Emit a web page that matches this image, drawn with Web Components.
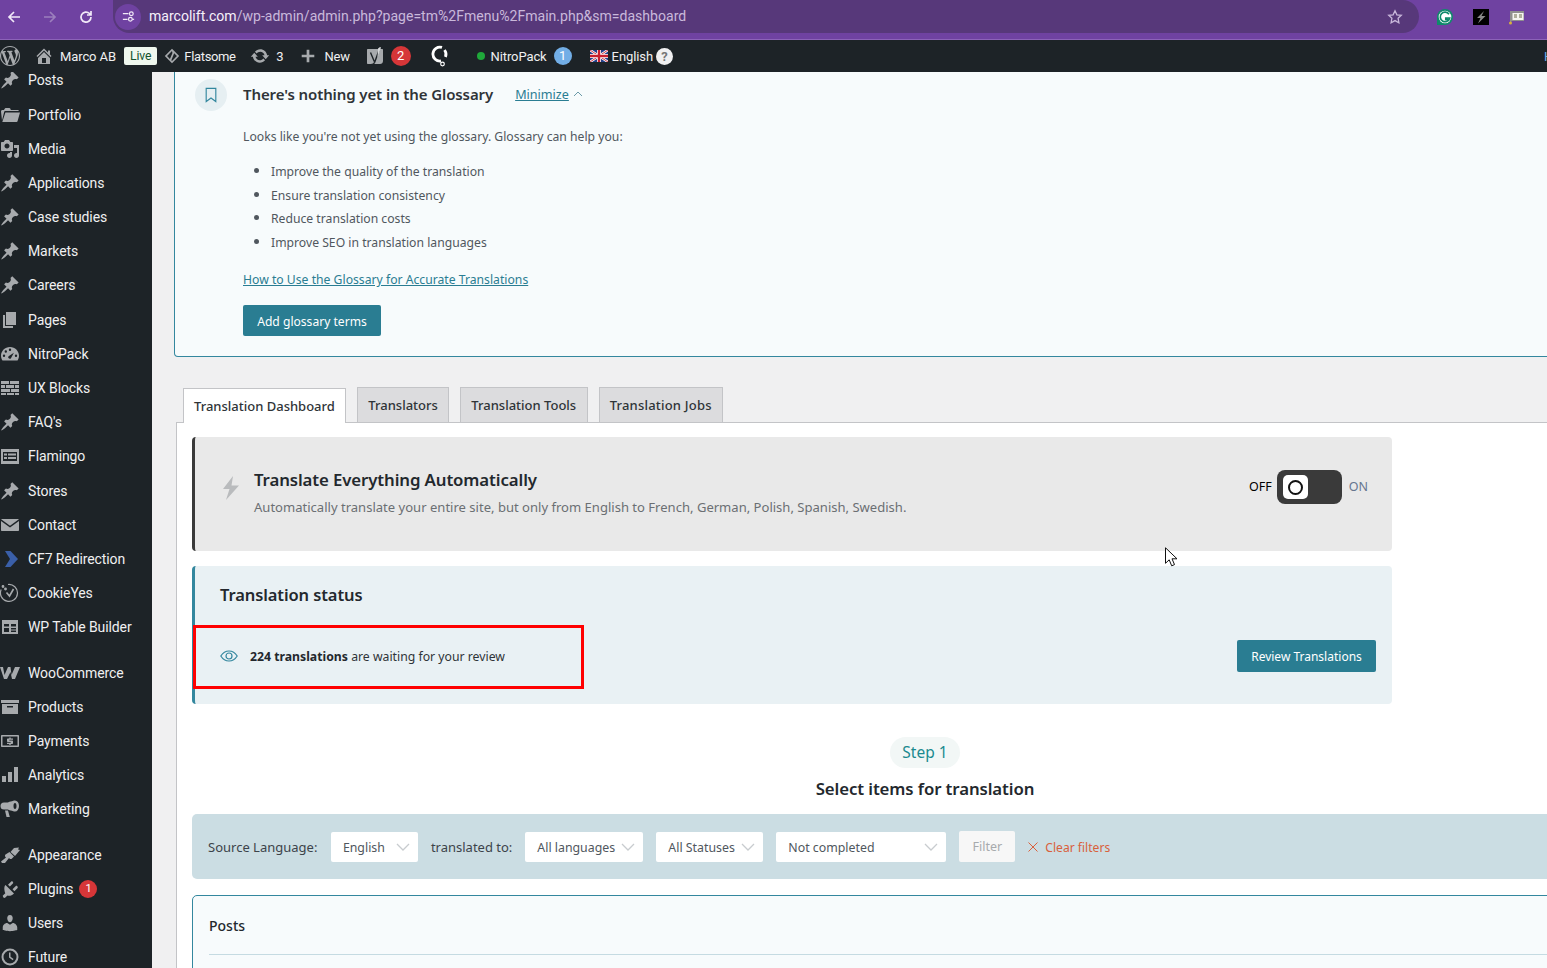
<!DOCTYPE html>
<html lang="en">
<head>
<meta charset="utf-8">
<title>Translation Dashboard</title>
<style>
    html, body {
        margin: 0;
        height: 968px;
        overflow: hidden;
        background: #f0f0f1;
        font-family: "Noto Sans", Roboto, sans-serif;
    }
    #page { position: relative; width: 1547px; height: 968px; overflow: hidden; display: flex; flex-direction: column; }
    #below { display: flex; flex: 1; min-height: 0; }
    #main { flex: 1; min-width: 0; overflow: hidden; }
</style>
</head>
<body>
<div id="page">
    <browser-bar url-host="marcolift.com" url-path="/wp-admin/admin.php?page=tm%2Fmenu%2Fmain.php&amp;sm=dashboard"></browser-bar>
    <admin-bar></admin-bar>
    <div id="below">
        <admin-menu></admin-menu>
        <div id="main">
            <glossary-panel></glossary-panel>
            <dashboard-tabs>
                <auto-translate></auto-translate>
                <translation-status></translation-status>
                <step-heading step="Step 1" title-text="Select items for translation"></step-heading>
                <filter-bar></filter-bar>
                <posts-panel></posts-panel>
            </dashboard-tabs>
        </div>
    </div>
    <review-highlight></review-highlight>
    <mouse-pointer></mouse-pointer>
</div>

<script>
// dashicons style paths, 20x20 box
const ICONS = {
    pin: 'M10.44 3.02l1.82-1.82 6.36 6.35-1.83 1.82c-1.05-.68-2.48-.57-3.41.36l-.75.75c-.92.93-1.04 2.35-.35 3.41l-1.83 1.82-2.41-2.41-2.8 2.79c-.42.42-3.38 2.71-3.8 2.29s1.86-3.39 2.28-3.81l2.79-2.79L4.1 9.36l1.83-1.82c1.05.69 2.48.57 3.4-.36l.75-.75c.93-.92 1.05-2.35.36-3.41z',
    folder: 'M1 6.5C1 5.7 1.6 5 2.4 5H4l.7-1.3c.2-.4.6-.7 1-.7h3.6c.5 0 .9.3 1.1.7l.4 1.3h7.4l.8 1H5.2c-.5 0-.9.3-1 .8L2 15.5 1 6.5zM5.4 7.5H20l-2.4 8.6c-.1.5-.5.9-1 .9H2.3z',
    media: 'M13 11V4c0-.55-.45-1-1-1h-1.67L9 1H5L3.67 3H2c-.55 0-1 .45-1 1v7c0 .55.45 1 1 1h10c.55 0 1-.45 1-1zM7 4.5c1.38 0 2.5 1.12 2.5 2.5S8.38 9.5 7 9.5 4.5 8.38 4.5 7 5.62 4.5 7 4.5zM14 6h5v10.5c0 1.38-1.12 2.5-2.5 2.5S14 17.88 14 16.5s1.12-2.5 2.5-2.5c.17 0 .34.02.5.05V9h-3V6zm-4 8.05V13h2v3.5c0 1.38-1.12 2.5-2.5 2.5S7 17.88 7 16.5 8.12 14 9.5 14c.17 0 .34.02.5.05z',
    page: 'M6 15V2h10v13H6zm-1 1h8v2H3V5h2v11z',
    gauge: 'M10 3C4.9 3 1 7 1 11.8c0 1.8.6 3.4 1.5 4.7h15c.9-1.3 1.5-2.9 1.5-4.7C19 7 15.1 3 10 3zM4 13a1.2 1.2 0 1 1 0-2.4A1.2 1.2 0 0 1 4 13zm1.8-4.3a1.2 1.2 0 1 1 0-2.4 1.2 1.2 0 0 1 0 2.4zM10 7a1.2 1.2 0 1 1 0-2.4A1.2 1.2 0 0 1 10 7zm.8 7.4c-.8.6-1.8.4-2.3-.3-.5-.7-.3-1.7.4-2.2l5-3.2-3.1 5.7zM16 13a1.2 1.2 0 1 1 0-2.4 1.2 1.2 0 0 1 0 2.4z',
    blocks: 'M1 3h8v3H1zM10 3h9v3h-9zM1 7h4v3H1zM6 7h8v3H6zM15 7h4v3h-4zM1 11h9v3H1zM11 11h8v3h-8zM1 15h5v2H1zM7 15h7v2H7zM15 15h4v2h-4z',
    form: 'M1 3h18v15H1zM3 6v9h14V6zM4 7.5h3v2H4zM8 7.5h8v2H8zM4 11h3v2H4zM8 11h8v2H8z',
    mail: 'M2 4h16c.4 0 .7.1.9.3L10 10.8 1.1 4.3C1.3 4.1 1.6 4 2 4zM1 6l9 6.5L19 6v9c0 .6-.4 1-1 1H2c-.6 0-1-.4-1-1z',
    chevron: 'M5 2h5.5L18 10l-7.5 8H5l5-8z',
    table: 'M2 3h16v14H2zM4 7v2.5h5V7zm7 0v2.5h5V7zM4 11v4h5v-4zm7 0v1.5h5V11zm0 2.5V15h5v-1.5z',
    woo: 'M0 4h3l1.5 8L8 4h2.5l1 8L15 4h5l-5 12h-3l-1.5-7L7 16H4z',
    box: 'M1 3h18v3H1zM2 7h16v10H2zm5 2v1.5h6V9z',
    pay: 'M2 4h16c.6 0 1 .4 1 1v10c0 .6-.4 1-1 1H2c-.6 0-1-.4-1-1V5c0-.6.4-1 1-1zm.5 1.500v9h15v-9zM9.3 6.5h1.4v.9H13v1.300H9.300v.8H12c.6 0 1 .4 1 1v1.500c0 .6-.4 1-1 1h-1.300v.9H9.300v-.9H7v-1.300h3.700v-.8H8c-.6 0-1-.4-1-1V8.400c0-.6.4-1 1-1h1.300z',
    bars: 'M2 11h4v6H2zM8 7h4v10H8zM14 2h4v15h-4z',
    horn: 'M15 1.500a4 5.500 0 0 1 0 11c-1.500 0-7.500-2-7.500-2H4a3.500 3.500 0 0 1 0-7h3.500S13.500 1.500 15 1.500zm0 2.500c-.9 0-1.500 1.300-1.500 3s.6 3 1.500 3 1.500-1.300 1.500-3-.6-3-1.500-3zM5 11.500h3l1.800 6.500H6.500z',
    brush: 'M14 3l5-.5-1 2 2 .5-5 6-4.500-4zM9.500 7l4.500 4.500-2 2c-.7.7-1.800.7-2.500 0l-.5-.5-4 5H2l-1-1.500 5-4-.5-.5c-.7-.7-.7-1.800 0-2.500z',
    plug: 'M13.110 4.360L9.870 7.600 8 5.730l3.240-3.240c.35-.34 1.050-.25 1.540.24.49.49.58 1.190.33 1.630zm4.530 4.530l-3.240 3.240-1.870-1.870 3.240-3.240c.35-.34 1.050-.25 1.540.24.49.49.58 1.190.33 1.630zM5.500 6l8.500 8.500c-2 2-4.500 2.800-6.500 2L4.800 19l-1.500-.4-.6-1.800 2.600-2.500C4.500 12.200 3.500 8 5.500 6z',
    user: 'M10 9.250c-2.270 0-2.730-3.440-2.730-3.440C7 4.020 7.820 2 9.970 2c2.160 0 2.980 2.020 2.710 3.810 0 0-.41 3.440-2.680 3.440zm0 2.570L12.720 10c2.390 0 4.520 2.330 4.520 4.530v2.490s-3.650 1.130-7.240 1.130c-3.650 0-7.240-1.130-7.240-1.130v-2.490c0-2.250 1.940-4.480 4.470-4.480z',
    clock: 'M10 1.500a8.500 8.500 0 1 1 0 17 8.500 8.500 0 0 1 0-17zm0 2a6.500 6.500 0 1 0 0 13 6.500 6.500 0 0 0 0-13zM9 5.500h1.500v4.300l3.100 2.100-.9 1.300L9 10.600z',
    home: 'M16 8.500l1.530 1.530-1.060 1.060L10 4.620l-6.470 6.470-1.060-1.060L10 2.500l4 4v-2h2v4zm-6-2.460l6 5.990V18H4v-5.970zM12 17v-5H8v5h4z',
    wp: 'M20 10c0-5.510-4.490-10-10-10C4.480 0 0 4.490 0 10c0 5.520 4.480 10 10 10 5.510 0 10-4.480 10-10zM7.780 15.370L4.370 6.220c.55-.02 1.170-.08 1.170-.08.5-.06.44-1.130-.06-1.110 0 0-1.450.11-2.370.11-.18 0-.37 0-.58-.01C4.120 2.690 6.870 1.110 10 1.110c2.330 0 4.450.87 6.050 2.340-.68-.11-1.650.39-1.650 1.580 0 .74.45 1.360.9 2.100.35.61.55 1.360.55 2.460 0 1.490-1.400 5-1.400 5l-3.030-8.370c.54-.02.82-.17.82-.17.5-.05.44-1.250-.06-1.220 0 0-1.440.12-2.380.12-.87 0-2.330-.12-2.330-.12-.5-.03-.56 1.200-.06 1.220l.92.08 1.260 3.410zM17.410 10c.24-.64.74-1.870.43-4.250.7 1.290 1.050 2.710 1.050 4.250 0 3.290-1.730 6.240-4.400 7.780.97-2.590 1.940-5.200 2.920-7.780zM6.100 18.090C3.120 16.650 1.110 13.530 1.110 10c0-1.300.23-2.480.72-3.590C3.250 10.300 4.670 14.200 6.100 18.090zm4.030-6.630l2.580 6.980c-.86.29-1.760.45-2.710.45-.79 0-1.570-.11-2.290-.33.81-2.380 1.620-4.740 2.420-7.100z',
    update: 'M10.200 3.280c3.530 0 6.430 2.610 6.920 6h2.080l-3.500 4-3.500-4h2.320c-.45-1.970-2.210-3.450-4.320-3.450-1.450 0-2.730.71-3.540 1.780L4.950 5.660C6.230 4.200 8.110 3.280 10.200 3.280zm-.4 13.440c-3.520 0-6.430-2.610-6.920-6H.8l3.500-4c1.170 1.330 2.330 2.670 3.500 4H5.480c.45 1.970 2.210 3.450 4.320 3.450 1.450 0 2.730-.71 3.540-1.780l1.710 1.950c-1.280 1.460-3.150 2.380-5.250 2.380z',
    plus: 'M8.500 3h3v5.500H17v3h-5.500V17h-3v-5.500H3v-3h5.500z',
    diamond: 'M10 2l8 8-8 8-8-8zm0 2.500L4.500 10l3.200 3.200 2.800-6.400zM9.300 14.800l.7.700 5.500-5.500-3.100-3.100z'
};

function icon(name, size = 20, extra = '') {
    return `<svg viewBox="0 0 20 20" width="${size}" height="${size}" fill="currentColor" ${extra} aria-hidden="true"><path fill-rule="evenodd" d="${ICONS[name]}"/></svg>`;
}

class BrowserBar extends HTMLElement {
    constructor() {
        super();
        this.attachShadow({ mode: 'open' });
    }

    connectedCallback() {
        const host = this.getAttribute('url-host');
        const path = this.getAttribute('url-path');
        this.shadowRoot.innerHTML = `
            <style>
                :host {
                    display: flex;
                    align-items: flex-start;
                    height: 39px;
                    flex: none;
                    background: #6f42a1;
                    border-bottom: 1px solid #8c63b8;
                    color: #f1e9f8;
                    font-family: Roboto, sans-serif;
                }
                .nav { display: flex; align-items: center; height: 33px; }
                .nav svg { display: block; width: 16px; height: 16px; }
                .nav span { width: 36px; display: flex; justify-content: center; }
                .nav span:first-child { width: 28px; margin-right: 4px; }
                .nav .off { color: #9c7fbd; }
                .pill {
                    flex: none;
                    width: 1306px;
                    height: 33px;
                    margin-left: 9px;
                    border-radius: 0 17px 17px 17px;
                    background: #57387a;
                    display: flex;
                    align-items: center;
                    font-size: 14.050px;
                }
                .tune {
                    width: 26px;
                    height: 26px;
                    margin-left: 2px;
                    border-radius: 50%;
                    background: #6f42a1;
                    display: flex;
                    align-items: center;
                    justify-content: center;
                }
                .host { margin: -1px 0 0 8px; color: #f6f1fa; }
                .path { margin-top: -1px; color: #c9b8db; }
                .star { margin-left: auto; margin-right: 16px; display: block; color: #c9b8db; }
                .ext { display: flex; align-items: center; height: 33px; gap: 20px; margin-left: 18px; }
                .ext svg { display: block; }
            </style>
            <div class="nav">
                <span><svg viewBox="0 0 16 16" fill="none" stroke="currentColor" stroke-width="1.700"><path d="M14 8H3M8 3L3 8l5 5"/></svg></span>
                <span class="off"><svg viewBox="0 0 16 16" fill="none" stroke="currentColor" stroke-width="1.700"><path d="M2 8h11M8 3l5 5-5 5"/></svg></span>
                <span><svg viewBox="0 0 16 16" fill="none" stroke="currentColor" stroke-width="1.700"><path d="M13 8a5 5 0 1 1-1.500-3.500L13 6M13 2v4H9"/></svg></span>
            </div>
            <div class="pill">
                <div class="tune"><svg viewBox="0 0 16 16" width="15" height="15" fill="none" stroke="currentColor" stroke-width="1.300"><path d="M2 5h6M2 11h5"/><circle cx="11" cy="5" r="2"/><circle cx="10" cy="11" r="2"/><path d="M12 11h2"/></svg></div>
                <span class="host">${host}</span><span class="path">${path.replace(/&/g, '&amp;')}</span>
                <svg class="star" viewBox="0 0 16 16" width="16" height="16" fill="none" stroke="currentColor" stroke-width="1.300"><path d="M8 1.800l1.900 4 4.400.5-3.200 3 .8 4.400L8 11.600l-3.900 2.100.8-4.400-3.200-3 4.400-.5z"/></svg>
            </div>
            <div class="ext">
                <svg viewBox="0 0 16 16" width="16" height="16"><circle cx="8" cy="8" r="8" fill="#0f8a6b"/><path d="M0 8v8h8z" fill="#0f8a6b"/><circle cx="8" cy="8" r="6.300" fill="#fff"/><path d="M12 5.200A4.800 4.800 0 1 0 12.700 9H8.800v1.500h2" fill="none" stroke="#0f8a6b" stroke-width="1.700"/></svg>
                <svg viewBox="0 0 16 16" width="16" height="16"><rect width="16" height="16" fill="#000"/><path d="M11 2L4 9h3.500L5 14.500 12.500 7H8.500z" fill="#8a8a8a"/></svg>
                <svg viewBox="0 0 16 16" width="16" height="16"><path d="M1 2h14v10H3L1 14z" fill="#8f8f8f"/><rect x="3.500" y="4" width="11" height="7" fill="#f5f5f0"/><path d="M5 6h3M5 8h3M10 6h3M10 8h3" stroke="#6a6a4a"/><circle cx="1.500" cy="14" r="1.500" fill="#d9b23a"/></svg>
            </div>
        `;
    }
}

class AdminBar extends HTMLElement {
    constructor() {
        super();
        this.attachShadow({ mode: 'open' });
    }

    connectedCallback() {
        this.shadowRoot.innerHTML = `
            <style>
                :host {
                    display: flex;
                    align-items: center;
                    height: 32px;
                    flex: none;
                    background: #1d2327;
                    color: #f0f0f1;
                    font: 13px/31px Roboto, sans-serif;
                    letter-spacing: -.1px;
                    white-space: nowrap;
                    position: relative;
                    z-index: 2;
                }
                svg { display: block; flex: none; color: #a7aaad; }
                .t { padding-top: 1px; }
                .live {
                    background: #eff7ee;
                    color: #14532d;
                    height: 18px;
                    line-height: 19px;
                    padding: 0 6px;
                    border-radius: 2px;
                    font-size: 12.200px;
                    margin: 0 6px 0 8px;
                }
                .count {
                    min-width: 20px;
                    height: 20px;
                    border-radius: 50%;
                    background: #d63638;
                    color: #fff;
                    line-height: 20px;
                    text-align: center;
                    font-size: 13px;
                }
                .blue { background: #72aee6; min-width: 18px; height: 18px; line-height: 18px; }
                .dot { width: 8px; height: 8px; border-radius: 50%; background: #1fa83a; flex: none; }
                .help {
                    width: 17px; height: 17px; border-radius: 50%;
                    background: #f0f0f1; color: #777;
                    text-align: center; line-height: 17px; font-size: 13px; font-weight: 700;
                }
                .howdy { margin-left: auto; width: 3px; overflow: hidden; color: #72aee6; }
            </style>
            ${icon('wp', 20)}
            ${icon('home', 20, 'style="margin-left:14px"')}
            <span class="t" style="margin-left:6px">Marco AB</span>
            <span class="live">Live</span>
            ${icon('diamond', 18)}
            <span class="t" style="margin-left:3px;letter-spacing:-.35px">Flatsome</span>
            ${icon('update', 20, 'style="margin-left:14.5px"')}
            <span class="t" style="margin-left:6px">3</span>
            ${icon('plus', 18, 'style="margin-left:15.5px"')}
            <span class="t" style="margin-left:7.5px">New</span>
            <svg viewBox="0 0 20 20" width="20" height="20" style="margin-left:14.5px">
                <path d="M3 3h14c.6 0 1 .4 1 1v11c0 1.700-1.300 3-3 3H3c-.6 0-1-.4-1-1V4c0-.6.4-1 1-1z" fill="#a7aaad"/>
                <path d="M5.500 6.500l3.800 9M15 1.500L9.700 16.200C9 18 8 18.500 6.500 18.500" fill="none" stroke="#1d2327" stroke-width="1.400"/>
                <path d="M13 2.500l2-1.500 1 .5-3.500 10z" fill="#d5d7d9"/>
            </svg>
            <span class="count" style="margin-left:6px">2</span>
            <svg viewBox="0 0 20 22" width="20" height="22" style="margin-left:19px;color:#fff" fill="none"><path d="M12 2.400a7 7 0 1 0-1 13.600" stroke="currentColor" stroke-width="2.800"/><path d="M14.500 5a7 7 0 0 1 1 7" stroke="currentColor" stroke-width="2.800"/><circle cx="12.500" cy="19" r="1.800" stroke="currentColor" stroke-width="1.200"/></svg>
            <span class="dot" style="margin-left:27px"></span>
            <span class="t" style="margin-left:6px">NitroPack</span>
            <span class="count blue" style="margin-left:7px">1</span>
            <svg viewBox="0 0 60 40" width="18" height="12" style="margin-left:18px">
                <rect width="60" height="40" fill="#22408c"/>
                <path d="M0 0l60 40M60 0L0 40" stroke="#fff" stroke-width="8"/>
                <path d="M0 0l60 40M60 0L0 40" stroke="#c8202f" stroke-width="3"/>
                <path d="M30 0v40M0 20h60" stroke="#fff" stroke-width="13"/>
                <path d="M30 0v40M0 20h60" stroke="#c8202f" stroke-width="8"/>
            </svg>
            <span class="t" style="margin-left:4px">English</span>
            <span class="help" style="margin-left:3px">?</span>
            <span class="howdy t">Howdy</span>
        `;
    }
}

class AdminMenu extends HTMLElement {
    constructor() {
        super();
        this.attachShadow({ mode: 'open' });
    }

    connectedCallback() {
        const items = [
            ['pin', 'Posts'], ['folder', 'Portfolio'], ['media', 'Media'], ['pin', 'Applications'],
            ['pin', 'Case studies'], ['pin', 'Markets'], ['pin', 'Careers'], ['page', 'Pages'],
            ['gauge', 'NitroPack'], ['blocks', 'UX Blocks'], ['pin', "FAQ's"], ['form', 'Flamingo'],
            ['pin', 'Stores'], ['mail', 'Contact'], ['chevron', 'CF7 Redirection', '#3a5fa8'],
            ['cookie', 'CookieYes'], ['table', 'WP Table Builder'], 11.2,
            ['woo', 'WooCommerce'], ['box', 'Products'], ['pay', 'Payments'], ['bars', 'Analytics'],
            ['horn', 'Marketing'], 11.3,
            ['brush', 'Appearance'], ['plug', 'Plugins', '', '1'], ['user', 'Users'], ['clock', 'Future']
        ];
        const cookie = '<svg viewBox="0 0 20 20" width="20" height="20" fill="none" stroke="currentColor" stroke-width="1.200"><path d="M8 1.500a8.500 8.500 0 1 1-6.800 5"/><path d="M6.500 9.500l3 3.500 4-7" stroke-width="1.600"/><circle cx="3" cy="3.500" r=".8" fill="currentColor"/><circle cx="5.500" cy="6" r=".8" fill="currentColor"/></svg>';
        const rows = items.map(item => {
            if (typeof item === 'number') return `<div style="height:${item}px"></div>`;
            const [name, label, color, badge] = item;
            const svg = name === 'cookie' ? cookie : icon(name);
            return `<div class="item">
                <span class="ic"${color ? ` style="color:${color}"` : ''}>${svg}</span>
                <span>${label}</span>
                ${badge ? `<span class="badge">${badge}</span>` : ''}
            </div>`;
        }).join('');
        this.shadowRoot.innerHTML = `
            <style>
                :host {
                    display: block;
                    flex: none;
                    width: 152px;
                    background: #1d2327;
                    color: #f0f0f1;
                    font: 14px Roboto, sans-serif;
                    letter-spacing: -.1px;
                    overflow: hidden;
                }
                .list { margin-top: -8.650px; }
                .item { display: flex; align-items: center; height: 34.180px; white-space: nowrap; }
                .ic { width: 28px; flex: none; color: #a7aaad; display: flex; }
                .ic svg { display: block; }
                .badge {
                    width: 18px; height: 18px; margin-left: 6px; border-radius: 50%;
                    background: #d63638; color: #fff; font-size: 11px; line-height: 18px; text-align: center;
                }
            </style>
            <div class="list">${rows}</div>
        `;
    }
}

class GlossaryPanel extends HTMLElement {
    constructor() {
        super();
        this.attachShadow({ mode: 'open' });
    }

    connectedCallback() {
        this.shadowRoot.innerHTML = `
            <style>
                :host {
                    display: block;
                    margin: 0 -20px 30px 22px;
                    height: 285px;
                    box-sizing: border-box;
                    padding: 7px 0 0 20px;
                    background: #f7fbfc;
                    border: 1px solid #33879e;
                    border-top: 0;
                    border-radius: 0 0 0 4px;
                    font-size: 12.200px;
                    color: #50575e;
                }
                .head { display: flex; align-items: center; height: 32px; }
                .circle {
                    width: 32px; height: 32px; border-radius: 50%;
                    background: #e6eff2; color: #33879e;
                    display: flex; align-items: center; justify-content: center;
                    margin-right: 16px;
                }
                h3 { margin: -2px 22px 0 0; font-size: 15px; font-weight: 600; color: #2f3438; letter-spacing: -.1px; }
                a { color: #2a7d92; text-decoration: underline; }
                .min { font-size: 12.600px; margin-top: -2px; }
                .chev { margin: -3px 0 0 4px; color: #6a9aa8; }
                .body { padding-left: 48px; }
                p { margin: 16px 0 0; line-height: 20px; }
                ul { margin: 12px 0 0; padding: 0 0 0 28px; }
                li { height: 23.600px; line-height: 23.600px; }
                li::marker { font-size: 14px; }
                .link { margin-top: 17px; }
                button {
                    display: block;
                    margin-top: 15px;
                    width: 138px; height: 31px;
                    padding: 1px 0 0;
                    background: #2a7d92; color: #fff; border: 0; border-radius: 2px;
                    font: inherit; font-size: 12.100px;
                }
            </style>
            <div class="head">
                <span class="circle"><svg viewBox="0 0 16 18" width="14" height="16" fill="none" stroke="currentColor" stroke-width="1.300"><path d="M2.500 1.500h11v15L8 12.500l-5.500 4z"/></svg></span>
                <h3>There's nothing yet in the Glossary</h3>
                <a class="min" href="#">Minimize</a>
                <svg class="chev" viewBox="0 0 10 6" width="10" height="6" fill="none" stroke="currentColor"><path d="M1 5l4-4 4 4"/></svg>
            </div>
            <div class="body">
                <p>Looks like you're not yet using the glossary. Glossary can help you:</p>
                <ul>
                    <li>Improve the quality of the translation</li>
                    <li>Ensure translation consistency</li>
                    <li>Reduce translation costs</li>
                    <li>Improve SEO in translation languages</li>
                </ul>
                <p class="link"><a href="#">How to Use the Glossary for Accurate Translations</a></p>
                <button>Add glossary terms</button>
            </div>
        `;
    }
}

class DashboardTabs extends HTMLElement {
    constructor() {
        super();
        this.attachShadow({ mode: 'open' });
    }

    connectedCallback() {
        this.shadowRoot.innerHTML = `
            <style>
                :host { display: block; margin-left: 24px; }
                .tabs {
                    display: flex;
                    align-items: flex-end;
                    gap: 11px;
                    height: 36px;
                    box-sizing: border-box;
                    padding-left: 7px;
                    border-bottom: 1px solid #c3c4c7;
                    font-size: 13px;
                    color: #2f3438;
                }
                .tab {
                    height: 35px;
                    box-sizing: border-box;
                    padding: 0 10px;
                    line-height: 34px;
                    background: #dcdcde;
                    border: 1px solid #c3c4c7;
                    border-bottom: 0;
                    font-weight: 500;
                }
                .tab.on { background: #fff; margin-bottom: -1px; line-height: 35px; padding: 0 10.500px 0 10px; }
                .tools { padding: 0 10.500px; }
                .jobs { letter-spacing: .2px; }
                .pane {
                    height: 600px;
                    background: #fff;
                    border-left: 1px solid #c3c4c7;
                    padding: 14px 0 0 15px;
                }
            </style>
            <div class="tabs">
                <div class="tab on">Translation Dashboard</div>
                <div class="tab">Translators</div>
                <div class="tab tools">Translation Tools</div>
                <div class="tab jobs">Translation Jobs</div>
            </div>
            <div class="pane"><slot></slot></div>
        `;
    }
}

class AutoTranslate extends HTMLElement {
    constructor() {
        super();
        this.attachShadow({ mode: 'open' });
    }

    connectedCallback() {
        this.shadowRoot.innerHTML = `
            <style>
                :host {
                    display: flex;
                    align-items: center;
                    width: 1200px;
                    height: 114px;
                    box-sizing: border-box;
                    margin-bottom: 15px;
                    background: #e9e9e9;
                    border-left: 3px solid #3a3a3a;
                    border-radius: 4px;
                }
                .bolt { margin: -12px 14px 0 27px; flex: none; }
                .text { margin-bottom: 4px; }
                h3 { margin: 0 0 7px; font-size: 16.800px; font-weight: 600; color: #23282d; letter-spacing: -.1px; }
                p { margin: 0; font-size: 13.060px; color: #6b6f73; }
                .sw { margin: -14px 0 0 auto; display: flex; align-items: center; font-size: 12.500px; padding-right: 24px; }
                .sw span { margin-top: -2px; }
                .track {
                    width: 65px; height: 34px; margin: 0 7px 0 5px; box-sizing: border-box;
                    background: #3a3a3a; border-radius: 8px; padding: 5px 6px;
                }
                .knob {
                    width: 25px; height: 24px; background: #fff; border-radius: 5px;
                    display: flex; align-items: center; justify-content: center;
                }
                .knob i { display: block; width: 11px; height: 11px; border: 2.500px solid #111; border-radius: 50%; }
                .on { color: #66768f; }
            </style>
            <svg class="bolt" viewBox="0 0 18 24" width="18" height="24"><path d="M11 0L1 13h6.500L4 24 17 9.500H9.500z" fill="#b9bbbd"/></svg>
            <div class="text">
                <h3>Translate Everything Automatically</h3>
                <p>Automatically translate your entire site, but only from English to French, German, Polish, Spanish, Swedish.</p>
            </div>
            <div class="sw">
                <span>OFF</span>
                <div class="track"><div class="knob"><i></i></div></div>
                <span class="on">ON</span>
            </div>
        `;
    }
}

class TranslationStatus extends HTMLElement {
    constructor() {
        super();
        this.attachShadow({ mode: 'open' });
    }

    connectedCallback() {
        this.shadowRoot.innerHTML = `
            <style>
                :host {
                    display: block;
                    width: 1200px;
                    height: 138px;
                    box-sizing: border-box;
                    padding: 16px 16px 0 25px;
                    background: #e9f1f4;
                    border-left: 3px solid #33879e;
                    border-radius: 4px;
                }
                h3 { margin: 0; font-size: 16.500px; line-height: 26px; font-weight: 600; color: #23282d; letter-spacing: -.1px; }
                .row { display: flex; align-items: center; margin-top: 32px; height: 32px; font-size: 12.250px; color: #2f3438; }
                .eye { margin-right: 12px; }
                b { font-weight: 700; color: #23282d; }
                button {
                    margin-left: auto; width: 139px; height: 32px;
                    background: #2a7d92; color: #fff; border: 0; border-radius: 2px;
                    font: inherit; font-size: 12px;
                }
            </style>
            <h3>Translation status</h3>
            <div class="row">
                <svg class="eye" viewBox="0 0 18 12" width="18" height="12" fill="none" stroke="#33879e" stroke-width="1.200"><path d="M.8 6C3 2.500 6 1 9 1s6 1.500 8.200 5C15 9.500 12 11 9 11S3 9.500.8 6z"/><circle cx="9" cy="6" r="3"/></svg>
                <span><b>224 translations</b> are waiting for your review</span>
                <button>Review Translations</button>
            </div>
        `;
    }
}

class StepHeading extends HTMLElement {
    constructor() {
        super();
        this.attachShadow({ mode: 'open' });
    }

    connectedCallback() {
        this.shadowRoot.innerHTML = `
            <style>
                :host {
                    display: flex;
                    flex-direction: column;
                    align-items: center;
                    width: 1466px;
                    padding-top: 33px;
                    height: 77px;
                }
                .pill {
                    height: 31px; line-height: 31px; padding: 0 12.500px; border-radius: 16px;
                    background: #f2f7f6; color: #1b8a8f; font-size: 15.500px;
                }
                h3 { margin: 8px 0 0; font-size: 16.800px; line-height: 26px; font-weight: 600; color: #23282d; letter-spacing: -.1px; }
            </style>
            <div class="pill">${this.getAttribute('step')}</div>
            <h3>${this.getAttribute('title-text')}</h3>
        `;
    }
}

class FilterSelect extends HTMLElement {
    constructor() {
        super();
        this.attachShadow({ mode: 'open' });
    }

    connectedCallback() {
        this.shadowRoot.innerHTML = `
            <style>
                :host {
                    display: flex;
                    align-items: center;
                    justify-content: space-between;
                    height: 30px;
                    box-sizing: border-box;
                    padding: 1px 8px 0 12px;
                    background: #fff;
                    border-radius: 2px;
                    font-size: 12.350px;
                    color: #50575e;
                    flex: none;
                }
                svg { display: block; }
            </style>
            <slot></slot>
            <svg viewBox="0 0 14 8" width="14" height="8" fill="none" stroke="#c8cccf" stroke-width="1.300"><path d="M1 1l6 6 6-6"/></svg>
        `;
    }
}

class FilterBar extends HTMLElement {
    constructor() {
        super();
        this.attachShadow({ mode: 'open' });
    }

    connectedCallback() {
        this.shadowRoot.innerHTML = `
            <style>
                :host {
                    display: flex;
                    align-items: center;
                    width: 1466px;
                    height: 65px;
                    box-sizing: border-box;
                    margin-bottom: 16px;
                    padding-left: 16px;
                    background: #cbdde3;
                    border-radius: 5px;
                    font-size: 13px;
                    color: #3c434a;
                    white-space: nowrap;
                }
                .filter {
                    width: 56px; height: 31px; margin: 0 13px 0 13px; flex: none;
                    background: #f7f7f7; color: #a7aaad; border-radius: 2px;
                    font-size: 12.500px; text-align: center; line-height: 31px;
                }
                .x { margin-right: 7px; display: block; }
                .clear { color: #d9603b; font-size: 12.100px; padding-top: 1px; }
            </style>
            <span>Source Language:</span>
            <filter-select style="width:87px;margin:0 13px 0 13.500px">English</filter-select>
            <span>translated to:</span>
            <filter-select style="width:118px;margin:0 13px 0 13px">All languages</filter-select>
            <filter-select style="width:107px;margin-right:13px">All Statuses</filter-select>
            <filter-select style="width:170px">Not completed</filter-select>
            <div class="filter">Filter</div>
            <svg class="x" viewBox="0 0 10 10" width="10" height="10" fill="none" stroke="#d9603b"><path d="M.5.5l9 9M9.500.5l-9 9"/></svg>
            <span class="clear">Clear filters</span>
        `;
    }
}

class PostsPanel extends HTMLElement {
    constructor() {
        super();
        this.attachShadow({ mode: 'open' });
    }

    connectedCallback() {
        this.shadowRoot.innerHTML = `
            <style>
                :host {
                    display: block;
                    width: 1466px;
                    height: 200px;
                    box-sizing: border-box;
                    padding: 19px 16px 0;
                    background: #f7fbfc;
                    border: 1px solid #33879e;
                    border-radius: 5px;
                }
                h4 { margin: 0; padding-bottom: 18px; border-bottom: 1px solid #c5dbe2; font-size: 14px; line-height: 21px; font-weight: 500; color: #23282d; }
            </style>
            <h4>Posts</h4>
        `;
    }
}

// red annotation drawn over the screenshot
class ReviewHighlight extends HTMLElement {
    constructor() {
        super();
        this.attachShadow({ mode: 'open' });
    }

    connectedCallback() {
        this.shadowRoot.innerHTML = `
            <style>
                :host {
                    position: absolute;
                    left: 193px;
                    top: 625px;
                    width: 391px;
                    height: 64px;
                    box-sizing: border-box;
                    border: 3px solid #f00;
                }
            </style>
        `;
    }
}

class MousePointer extends HTMLElement {
    constructor() {
        super();
        this.attachShadow({ mode: 'open' });
    }

    connectedCallback() {
        this.shadowRoot.innerHTML = `
            <style>
                :host { position: absolute; left: 1165px; top: 547px; width: 13px; height: 20px; }
                svg { display: block; }
            </style>
            <svg viewBox="0 0 13 20" width="13" height="20"><path d="M.5.800v15.500l3.700-3.500 2.500 6 2.800-1.200-2.500-5.800h5z" fill="#fff" stroke="#111"/></svg>
        `;
    }
}

customElements.define('browser-bar', BrowserBar);
customElements.define('admin-bar', AdminBar);
customElements.define('admin-menu', AdminMenu);
customElements.define('glossary-panel', GlossaryPanel);
customElements.define('dashboard-tabs', DashboardTabs);
customElements.define('auto-translate', AutoTranslate);
customElements.define('translation-status', TranslationStatus);
customElements.define('step-heading', StepHeading);
customElements.define('filter-select', FilterSelect);
customElements.define('filter-bar', FilterBar);
customElements.define('posts-panel', PostsPanel);
customElements.define('review-highlight', ReviewHighlight);
customElements.define('mouse-pointer', MousePointer);
</script>
</body>
</html>
